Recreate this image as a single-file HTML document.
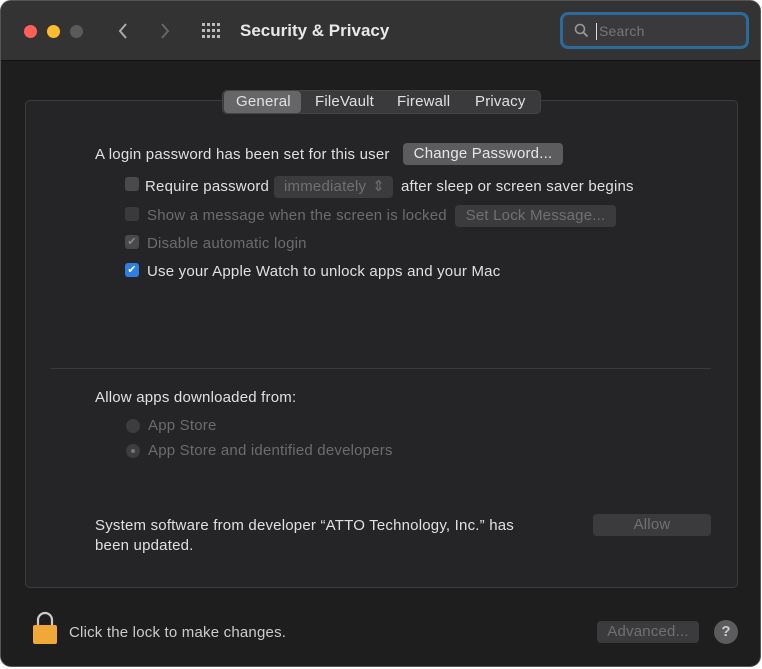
<!DOCTYPE html>
<html><head><style>
*{margin:0;padding:0;box-sizing:border-box}
body{width:762px;height:669px;background:#fff;position:relative;overflow:hidden;font-family:"Liberation Sans",sans-serif;font-size:15px;letter-spacing:0.2px;color:#e0e0e0}
.win{position:absolute;left:0;top:0;width:761px;height:667px;background:#1e1e1f;border-radius:11px;overflow:hidden;border:1px solid #555}
.tb{position:absolute;left:0;top:0;width:100%;height:60px;background:#333334;border-bottom:1px solid #111}
.a{position:absolute;white-space:nowrap}
.dot{position:absolute;width:13px;height:13px;border-radius:50%;top:24px}
.panel{position:absolute;left:24px;top:99px;width:713px;height:488px;background:#252527;border:1px solid #3c3c3e;border-radius:5px}
.btn{position:absolute;background:#5c5c5e;border-radius:4px;color:#e6e6e6;text-align:center;height:22px;line-height:22px}
.dis{background:#3b3b3d;color:#707072}
.cb{position:absolute;width:14px;height:14px;border-radius:3px;background:#4a4a4c}
.g{color:#6c6c6e}
</style></head><body>
<div class="win">
<div class="tb">
<div class="dot" style="left:23px;background:#fe5f57"></div>
<div class="dot" style="left:46px;background:#febc2e"></div>
<div class="dot" style="left:69px;background:#5a5a5c"></div>
<svg class="a" style="left:116px;top:21px" width="12" height="18"><path d="M9 2L3 9l6 7" stroke="#aaa" stroke-width="2" fill="none"/></svg>
<svg class="a" style="left:158px;top:21px" width="12" height="18"><path d="M3 2l6 7-6 7" stroke="#666" stroke-width="2" fill="none"/></svg>
<svg class="a" style="left:201px;top:22px" width="20" height="16"><g fill="#bbb"><rect x="0" y="0" width="3" height="3"/><rect x="5" y="0" width="3" height="3"/><rect x="10" y="0" width="3" height="3"/><rect x="15" y="0" width="3" height="3"/><rect x="0" y="6" width="3" height="3"/><rect x="5" y="6" width="3" height="3"/><rect x="10" y="6" width="3" height="3"/><rect x="15" y="6" width="3" height="3"/><rect x="0" y="12" width="3" height="3"/><rect x="5" y="12" width="3" height="3"/><rect x="10" y="12" width="3" height="3"/><rect x="15" y="12" width="3" height="3"/></g></svg>
<div class="a" style="left:239px;top:20px;font-size:17px;font-weight:bold;color:#e8e8e8;letter-spacing:0">Security &amp; Privacy</div>
<div class="a" style="left:559px;top:11px;width:189px;height:37px;border:3px solid #2a6b9c;border-radius:8px;background:#3a3a3c"></div>
<svg class="a" style="left:573px;top:22px" width="16" height="16"><circle cx="6" cy="6" r="4.5" stroke="#999" stroke-width="1.6" fill="none"/><path d="M9.5 9.5l4 4" stroke="#999" stroke-width="1.8"/></svg>
<div class="a" style="left:595px;top:22px;width:1px;height:17px;background:#ddd"></div>
<div class="a" style="left:598px;top:22px;color:#777;font-size:14px">Search</div>
</div>
<div class="panel"></div>
<div class="a" style="left:221px;top:89px;width:319px;height:24px;background:#3a3a3c;border-radius:5px;border:1px solid #444"></div>
<div class="a" style="left:223px;top:90px;width:77px;height:22px;background:#666668;border-radius:4px"></div>
<div class="a" style="left:235px;top:92px">General</div>
<div class="a" style="left:314px;top:92px">FileVault</div>
<div class="a" style="left:396px;top:92px">Firewall</div>
<div class="a" style="left:474px;top:92px">Privacy</div>

<div class="a" style="left:94px;top:145px">A login password has been set for this user</div>
<div class="btn" style="left:402px;top:142px;width:160px">Change Password...</div>
<div class="cb" style="left:124px;top:176px"></div>
<div class="a" style="left:144px;top:177px">Require password</div>
<div class="btn dis" style="left:273px;top:175px;width:119px;text-align:left;padding-left:10px">immediately <span style="position:absolute;right:8px">⇕</span></div>
<div class="a" style="left:400px;top:177px">after sleep or screen saver begins</div>
<div class="cb" style="left:124px;top:206px;background:#3a3a3c"></div>
<div class="a g" style="left:146px;top:206px">Show a message when the screen is locked</div>
<div class="btn dis" style="left:454px;top:204px;width:161px">Set Lock Message...</div>
<div class="cb" style="left:124px;top:234px;background:#4a4a4c;color:#8a8a8a;font-size:11px;line-height:14px;text-align:center">✔</div>
<div class="a g" style="left:146px;top:234px">Disable automatic login</div>
<div class="cb" style="left:124px;top:262px;background:#2f7fe0;color:#fff;font-size:11px;line-height:14px;text-align:center">✔</div>
<div class="a" style="left:146px;top:262px">Use your Apple Watch to unlock apps and your Mac</div>

<div class="a" style="left:50px;top:367px;width:660px;height:1px;background:#3a3a3c"></div>
<div class="a" style="left:94px;top:388px">Allow apps downloaded from:</div>
<div class="a" style="left:125px;top:418px;width:14px;height:14px;border-radius:50%;background:#3d3d3f"></div>
<div class="a g" style="left:147px;top:416px">App Store</div>
<div class="a" style="left:125px;top:443px;width:14px;height:14px;border-radius:50%;background:#3d3d3f"><div style="position:absolute;left:5px;top:5px;width:4px;height:4px;border-radius:50%;background:#777"></div></div>
<div class="a g" style="left:147px;top:441px">App Store and identified developers</div>

<div class="a" style="left:94px;top:515px;line-height:20px">System software from developer “ATTO Technology, Inc.” has<br>been updated.</div>
<div class="btn dis" style="left:592px;top:513px;width:118px">Allow</div>

<svg class="a" style="left:30px;top:610px" width="28" height="34"><path d="M7 15V9a7 7 0 0 1 14 0v6" stroke="#ccc" stroke-width="2.2" fill="none"/><rect x="2" y="14" width="24" height="19" rx="2" fill="#f0a836"/></svg>
<div class="a" style="left:68px;top:623px;color:#ccc">Click the lock to make changes.</div>
<div class="btn dis" style="left:596px;top:620px;width:102px">Advanced...</div>
<div class="a" style="left:713px;top:619px;width:24px;height:24px;border-radius:50%;background:#5c5c5e;color:#ccc;text-align:center;line-height:24px;font-weight:bold">?</div>
</div>
</body></html>
